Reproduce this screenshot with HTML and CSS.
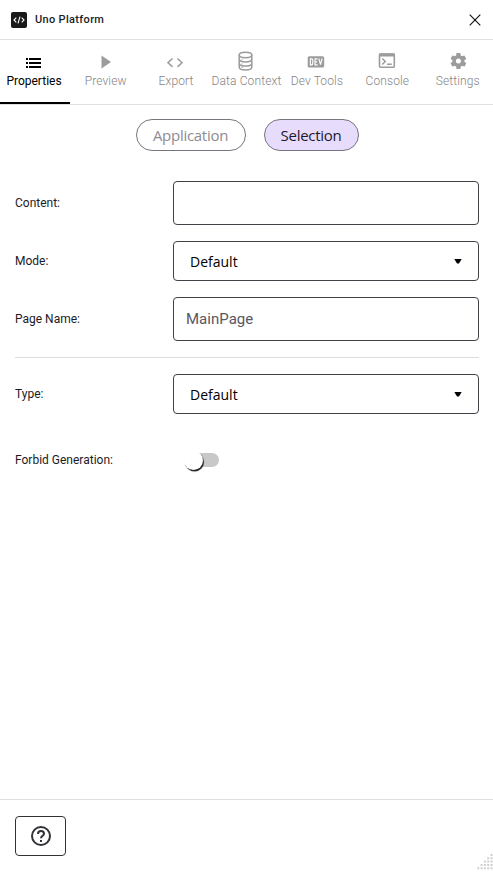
FILE: index.html
```html
<!DOCTYPE html>
<html lang="en">
<head>
<meta charset="utf-8">
<title>Uno Platform</title>
<link rel="stylesheet" href="styles.css">
</head>
<body>
<div class="panel">
  <header class="titlebar">
    <svg class="logo" width="16" height="16" viewBox="0 0 16 16"><rect width="16" height="16" rx="2" fill="#191919"/><path d="M5.300 5.700 3 8l2.300 2.300M10.700 5.700 13 8l-2.300 2.300M9 4.700 7 11.300" fill="none" stroke="#fff" stroke-width="1.100"/></svg>
    <h1 class="title">Uno Platform</h1>
    <svg class="close" width="12" height="12" viewBox="0 0 12 12"><path d="M.7.7l10.600 10.600M11.300.7.700 11.300" stroke="#111" stroke-width="1.150"/></svg>
  </header>
  <nav class="tabs">
    <a class="tab active"><svg class="icon" width="20" height="20" viewBox="0 0 20 20"><path d="M1 7h2v2H1zM1 11h2v2H1zM1 15h2v2H1zM4 7h12v2H4zM4 11h12v2H4zM4 15h12v2H4z"/></svg><span>Properties</span></a>
    <a class="tab"><svg class="icon" width="20" height="20" viewBox="0 0 20 20"><path d="M5.500 4.500v13L15 11z"/></svg><span>Preview</span></a>
    <a class="tab"><svg class="icon" width="20" height="20" viewBox="0 0 20 20"><path d="M5.500 7.500 1 11.700l4.500 4.200M10.500 7.500 15 11.700l-4.500 4.200" fill="none" stroke="currentColor" stroke-width="1.500"/></svg><span>Export</span></a>
    <a class="tab"><svg class="icon" width="20" height="20" viewBox="0 0 20 20"><g fill="none" stroke="currentColor" stroke-width="1.500"><ellipse cx="8.500" cy="4" rx="6.300" ry="2.700"/><path d="M2.200 4v12c0 1.700 2.800 3 6.300 3s6.300-1.300 6.300-3v-12M2.200 8.100c0 1.700 2.800 2.900 6.300 2.900s6.300-1.200 6.300-2.900M2.200 12.200c0 1.700 2.800 2.900 6.300 2.900s6.300-1.200 6.300-2.900"/></g><path d="M4.500 8.300h1v1h-1zM4.500 12.400h1v1h-1zM4.500 16.100h1v1h-1z"/></svg><span>Data Context</span></a>
    <a class="tab"><svg class="icon" width="20" height="20" viewBox="0 0 20 20"><rect x=".7" y="5.200" width="16.500" height="11.300" rx="1.500"/><path d="M3.400 7.900v6h1.100q1.300 0 1.300-1.300V9.200q0-1.300-1.300-1.300zM10.600 7.900H8v6h2.600M8 10.900h2.100M11.900 7.500l1.600 6.200 1.600-6.200" fill="none" stroke="#fff" stroke-width="1.100"/></svg><span>Dev Tools</span></a>
    <a class="tab"><svg class="icon" width="20" height="20" viewBox="0 0 20 20"><rect x="1.500" y="3" width="14.800" height="13.200" rx="1" fill="none" stroke="currentColor" stroke-width="1.600"/><path d="M1.200 2.500h15.500v3H1.200z"/><path d="m4.300 7.500 3 3-3 3M9 13.300h4.700" fill="none" stroke="currentColor" stroke-width="1.500"/></svg><span>Console</span></a>
    <a class="tab"><svg class="icon" width="20" height="20" viewBox="-.5 0 24 24"><path d="M19.140 12.940c.040-.3.060-.610.060-.940s-.020-.640-.070-.940l2.030-1.580a.49.49 0 0 0 .12-.61l-1.920-3.320a.49.49 0 0 0-.59-.22l-2.390.96a7 7 0 0 0-1.620-.94L14.400 2.810A.48.48 0 0 0 13.920 2.400h-3.840a.47.47 0 0 0-.47.41L9.250 5.350a7.300 7.300 0 0 0-1.620.94l-2.390-.96a.47.47 0 0 0-.59.22L2.740 8.870a.47.47 0 0 0 .12.61l2.030 1.580a6 6 0 0 0 0 1.880l-2.030 1.580a.49.49 0 0 0-.12.61l1.920 3.320c.12.22.37.290.590.220l2.390-.960c.5.380 1.030.7 1.620.940l.360 2.540c.05.240.240.410.480.410h3.840c.240 0 .44-.170.470-.410l.360-2.540a7.300 7.300 0 0 0 1.620-.940l2.390.960c.22.080.470 0 .590-.220l1.920-3.320a.47.47 0 0 0-.12-.610zM12 15a3 3 0 1 1 0-6 3 3 0 0 1 0 6z"/></svg><span>Settings</span></a>
  </nav>
  <main class="content">
    <div class="chips"><button class="chip application">Application</button><button class="chip selection">Selection</button></div>
    <form class="fields">
      <div class="row"><span class="name">Content:</span><div class="box input"></div></div>
      <div class="row"><span class="name">Mode:</span><div class="box select"><span>Default</span><i class="caret"></i></div></div>
      <div class="row"><span class="name">Page Name:</span><div class="box input"><span>MainPage</span></div></div>
      <div class="divider"></div>
      <div class="row"><span class="name">Type:</span><div class="box select"><span>Default</span><i class="caret"></i></div></div>
      <div class="row toggle-row"><span class="name">Forbid Generation:</span><div class="switch"><div class="track"></div><div class="thumb"></div></div></div>
    </form>
  </main>
  <footer class="footer">
    <button class="help"><svg width="20" height="20" viewBox="0 0 20 20" fill="none" stroke="#333136" stroke-width="2"><circle cx="10" cy="10" r="9"/><path d="M7 8q0-3 3-3t3 2.700c0 2-3 2.200-3 4.500M10 14v2"/></svg></button>
    <svg class="grip" width="16" height="16" viewBox="0 0 16 16" fill="#d0d0d0"><path d="M13.500 0h2v2h-2zM10.200 3.300h2v2h-2zM13.500 3.300h2v2h-2zM6.900 6.600h2v2h-2zM10.200 6.600h2v2h-2zM13.500 6.600h2v2h-2zM3.600 9.900h2v2h-2zM6.900 9.900h2v2h-2zM10.200 9.900h2v2h-2zM13.500 9.900h2v2h-2zM.3 13.200h2v2h-2zM3.600 13.200h2v2h-2zM6.900 13.200h2v2h-2zM10.200 13.200h2v2h-2zM13.500 13.200h2v2h-2z"/></svg>
  </footer>
</div>
</body>
</html>
```

FILE: styles.css
```css
* { box-sizing: border-box; }
body { margin: 0; background: #fff; color: #1c1b1f; font-family: Roboto, sans-serif; }
button { padding: 0; font: inherit; background: #fff; }
svg { display: block; flex-shrink: 0; }
.panel { display: flex; flex-direction: column; height: 872px; }
.titlebar { display: flex; align-items: center; height: 40px; padding: 0 12px 0 11px; border-bottom: 1px solid #e0e0e0; }
.title { margin: 0 auto 0 8px; padding-bottom: 1px; font-size: 11px; font-weight: 500; letter-spacing: .33px; }
.tabs { display: grid; grid-template-columns: repeat(7, 1fr); height: 65px; border-bottom: 1px solid #e0e0e0; }
.tab { display: flex; flex-direction: column; align-items: center; min-width: 0; height: 64px; padding-top: 11px; color: #9c9c9c; font-size: 12px; line-height: 16px; white-space: nowrap; letter-spacing: .12px; }
.tab .icon { margin-bottom: 2px; margin-left: 1px; fill: currentColor; }
.tab span { font-weight: 300; color: #848484; }
.tab.active { color: #000; border-bottom: 2px solid #000; margin-right: .4px; }
.tab.active span { margin-left: -2px; font-weight: 400; color: #000; letter-spacing: 0; }
.tab.active .icon { margin-left: 0; }
.content { flex: 1; padding: 14px 14px 0 15px; }
.chips { display: flex; justify-content: center; gap: 18px; height: 32px; }
.chip { height: 32px; border: 1px solid #79747e; border-radius: 16px; font-family: "Open Sans", sans-serif; font-size: 15px; letter-spacing: -.28px; }
.application { width: 110px; color: #8e8b93; }
.selection { width: 95px; color: #1d192b; background: #e8dcfc; }
.fields { display: flex; flex-direction: column; gap: 16px; margin-top: 30px; }
.row { display: grid; grid-template-columns: 158px 1fr; align-items: center; }
.name { font-size: 12px; }
.box { display: flex; align-items: center; border: 1px solid #434147; border-radius: 4px; }
.input { height: 44px; padding: 0 12px; color: #5a565f; font-size: 15px; letter-spacing: .02px; }
.select { justify-content: space-between; height: 40px; padding: 0 16px; font-family: "Open Sans", sans-serif; font-size: 14px; color: #000; }
.caret { width: 8px; height: 5px; background: #000; clip-path: polygon(0 0, 100% 0, 62% 100%, 38% 100%); }
.divider { height: 1px; background: #dedede; }
.toggle-row { height: 24px; margin-top: 18px; }
.switch { display: flex; align-items: center; height: 20px; padding-left: 12px; }
.track { width: 34px; height: 14px; border-radius: 7px; background: #c8c8c8; }
.thumb { width: 19px; height: 19px; margin-left: -35px; border-radius: 50%; background: #fff; box-shadow: 1px 1.500px .7px #222; }
.footer { display: flex; justify-content: space-between; height: 73px; padding: 16px 0 0 15px; border-top: 1px solid #dedede; }
.help { display: flex; align-items: center; justify-content: center; width: 51px; height: 40px; border: 1px solid #333136; border-radius: 4px; }
.grip { align-self: flex-end; margin: 0 0 2px; }
```
